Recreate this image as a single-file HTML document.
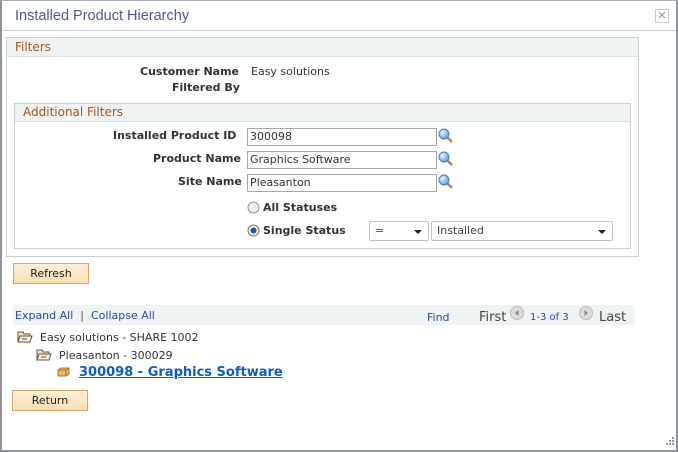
<!DOCTYPE html>
<html><head><meta charset="utf-8"><style>
*{margin:0;padding:0;box-sizing:border-box}
body{width:678px;height:452px;position:relative;background:#fff;font-family:"DejaVu Sans",Verdana,sans-serif;font-size:11px;color:#333;overflow:hidden}
.a{position:absolute;white-space:nowrap}
.b{font-weight:bold;color:#333}
.inp{position:absolute;height:18px;border:1px solid #a8a8a8;background:#fff;padding:1px 2px;font-size:11px;color:#333}
.btn{position:absolute;border:1px solid #d6a56b;background:linear-gradient(#fdf0d8,#f9dfb5);text-align:center;font-size:11px;color:#222;line-height:19px}
.sel{position:absolute;height:20px;border:1px solid #c4c4c4;border-radius:2px;background:#fff;padding:2px 5px;color:#444}
.tri{position:absolute;right:6px;top:8px;width:0;height:0;border-left:4px solid transparent;border-right:4px solid transparent;border-top:4px solid #222}
</style></head><body>
<div class="a" style="left:0;top:0;width:678px;height:452px;border:2px solid #8f9496;border-top:1px solid #aeb2b5"></div>
<div class="a" style="left:15px;top:8px;font-family:'Liberation Sans',Arial,sans-serif;font-size:14.5px;color:#4b5b8c">Installed Product Hierarchy</div>
<div class="a" style="left:655px;top:9px;width:14px;height:14px;border:1px solid #c8c8c8;color:#999;font-size:11px;line-height:12px;text-align:center">✕</div>
<div class="a" style="left:2px;top:30px;width:674px;height:1px;background:#c9ccce"></div>

<div class="a" style="left:6px;top:37px;width:633px;height:220px;border:1px solid #cdd0d2"></div>
<div class="a" style="left:7px;top:38px;width:631px;height:19px;background:#eff2f3;border-bottom:1px solid #dde0e2"></div>
<div class="a" style="left:15px;top:40px;font-size:12px;color:#b05618">Filters</div>
<div class="a b" style="left:140px;top:65px">Customer Name</div>
<div class="a" style="left:251px;top:65px">Easy solutions</div>
<div class="a b" style="left:172px;top:81px">Filtered By</div>

<div class="a" style="left:14px;top:103px;width:617px;height:146px;border:1px solid #cdd0d2"></div>
<div class="a" style="left:15px;top:104px;width:615px;height:18px;background:#eff2f3;border-bottom:1px solid #dde0e2"></div>
<div class="a" style="left:23px;top:105px;font-size:12px;color:#b05618">Additional Filters</div>

<div class="a b" style="left:113px;top:129px">Installed Product ID</div>
<div class="inp" style="left:247px;top:128px;width:190px">300098</div>
<div class="a b" style="left:153px;top:152px">Product Name</div>
<div class="inp" style="left:247px;top:151px;width:190px">Graphics Software</div>
<div class="a b" style="left:178px;top:175px">Site Name</div>
<div class="inp" style="left:247px;top:174px;width:190px">Pleasanton</div>
<svg class="a" style="left:438px;top:128px" width="16" height="70" viewBox="0 0 16 70">
<defs><radialGradient id="g" cx="0.35" cy="0.35" r="0.7"><stop offset="0" stop-color="#e6f3ff"/><stop offset="1" stop-color="#5b9ad6"/></radialGradient></defs>
<g><line x1="9" y1="9" x2="14" y2="14" stroke="#b8865a" stroke-width="2.5"/><circle cx="6" cy="6" r="5" fill="url(#g)" stroke="#4b7fb5"/></g>
<g transform="translate(0,23)"><line x1="9" y1="9" x2="14" y2="14" stroke="#b8865a" stroke-width="2.5"/><circle cx="6" cy="6" r="5" fill="url(#g)" stroke="#4b7fb5"/></g>
<g transform="translate(0,46)"><line x1="9" y1="9" x2="14" y2="14" stroke="#b8865a" stroke-width="2.5"/><circle cx="6" cy="6" r="5" fill="url(#g)" stroke="#4b7fb5"/></g>
</svg>
<svg class="a" style="left:247px;top:201px" width="14" height="40"><circle cx="6.5" cy="6.5" r="5.5" fill="#eee" stroke="#999"/><circle cx="6.5" cy="29.5" r="5.5" fill="#eee" stroke="#777"/><circle cx="6.5" cy="29.5" r="3" fill="#1d5aa8"/></svg>
<div class="a b" style="left:263px;top:201px">All Statuses</div>
<div class="a b" style="left:263px;top:224px">Single Status</div>
<div class="sel" style="left:369px;top:221px;width:60px">=<span class="tri"></span></div>
<div class="sel" style="left:431px;top:221px;width:182px">Installed<span class="tri"></span></div>

<div class="btn" style="left:13px;top:263px;width:76px;height:21px">Refresh</div>

<div class="a" style="left:13px;top:305px;width:622px;height:20px;background:#eff3f4"></div>
<div class="a" style="left:15px;top:309px;color:#2c4aa0">Expand All <span style="color:#555">&nbsp;|&nbsp;</span> Collapse All</div>
<div class="a" style="left:427px;top:311px;color:#2c4aa0">Find</div>
<div class="a" style="left:479px;top:310px;font-size:13px;color:#444">First</div>
<svg class="a" style="left:510px;top:306px" width="14" height="14"><circle cx="7" cy="7" r="6.5" fill="#ddd" stroke="#bbb"/><path d="M8.5 4 L5 7 L8.5 10Z" fill="#888"/></svg>
<div class="a" style="left:530px;top:312px;font-size:10px;color:#2c4aa0">1-3 of 3</div>
<svg class="a" style="left:579px;top:306px" width="14" height="14"><circle cx="7" cy="7" r="6.5" fill="#ddd" stroke="#bbb"/><path d="M5.5 4 L9 7 L5.5 10Z" fill="#888"/></svg>
<div class="a" style="left:599px;top:310px;font-size:13px;color:#444">Last</div>

<svg class="a" style="left:17px;top:331px" width="16" height="12"><path d="M1 1h5l1 2h6v8H1z" fill="#f8e8b8" stroke="#555"/><path d="M3 5h12l-2 6H1z" fill="#fbefcc" stroke="#555"/><line x1="5" y1="8" x2="10" y2="8" stroke="#555"/></svg>
<div class="a" style="left:40px;top:331px">Easy solutions - SHARE 1002</div>
<svg class="a" style="left:36px;top:349px" width="16" height="12"><path d="M1 1h5l1 2h6v8H1z" fill="#f8e8b8" stroke="#555"/><path d="M3 5h12l-2 6H1z" fill="#fbefcc" stroke="#555"/><line x1="5" y1="8" x2="10" y2="8" stroke="#555"/></svg>
<div class="a" style="left:59px;top:349px">Pleasanton - 300029</div>
<svg class="a" style="left:57px;top:367px" width="13" height="10"><path d="M1 3l3-2h8v6l-3 2H1z" fill="#f2b559" stroke="#9a7a44"/><path d="M1 3h8v6M9 3l3-2" fill="none" stroke="#9a7a44"/></svg>
<div class="a" style="left:79px;top:365px;font-size:13px;font-weight:bold;color:#0d5cc4;text-decoration:underline">300098 - Graphics Software</div>

<div class="btn" style="left:12px;top:390px;width:76px;height:21px">Return</div>
<svg class="a" style="left:664px;top:436px" width="12" height="12"><g fill="#999"><rect x="8" y="1" width="2" height="2"/><rect x="5" y="4" width="2" height="2"/><rect x="8" y="4" width="2" height="2"/><rect x="2" y="7" width="2" height="2"/><rect x="5" y="7" width="2" height="2"/><rect x="8" y="7" width="2" height="2"/></g></svg>
</body></html>
